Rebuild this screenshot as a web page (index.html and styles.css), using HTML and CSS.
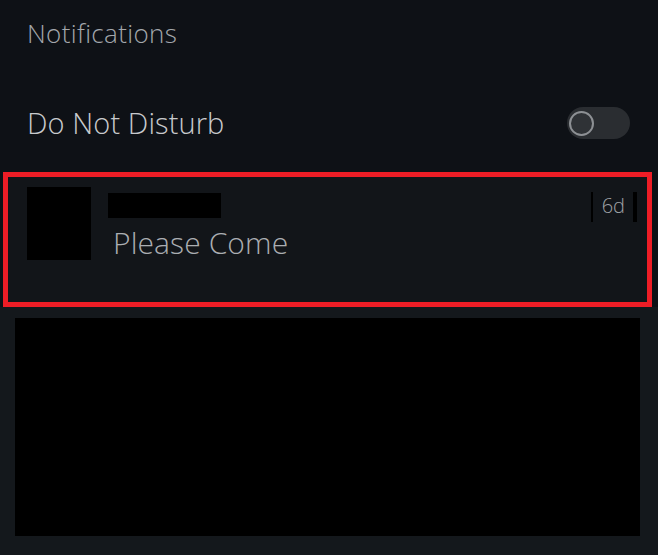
FILE: index.html
```html
<!DOCTYPE html>
<html lang="en">
<head>
<meta charset="utf-8">
<title>Notifications</title>
<link rel="stylesheet" href="styles.css">
</head>
<body>
<div class="screen">
  <div class="top">
    <h1 class="title">Notifications</h1>
    <div class="dnd-row">
      <span class="dnd-label">Do Not Disturb</span>
      <span class="toggle"><span class="knob"></span></span>
    </div>
  </div>
  <div class="card">
    <div class="avatar"></div>
    <div class="body">
      <div class="name-bar"></div>
      <div class="message">Please Come</div>
    </div>
    <div class="time"><span class="bar-thin"></span><span class="age">6d</span><span class="bar-thick"></span></div>
  </div>
  <div class="bottom">
    <div class="media"></div>
  </div>
</div>
</body>
</html>
```

FILE: styles.css
```css
html, body {
  margin: 0;
  padding: 0;
  background: #0e1116;
}
.screen {
  width: 658px;
  height: 555px;
  overflow: hidden;
  display: flex;
  flex-direction: column;
  font-family: "Open Sans", "Noto Sans", sans-serif;
  font-weight: 300;
  background: #0e1116;
}
.top {
  padding: 15px 28px 0 27px;
  height: 157px;
  box-sizing: border-box;
}
.title {
  margin: 0;
  font-size: 26px;
  font-weight: 300;
  line-height: 36px;
  color: #a3a7ac;
  letter-spacing: 0.35px;
}
.dnd-row {
  margin-top: 55px;
  display: flex;
  align-items: center;
  justify-content: space-between;
  height: 34px;
}
.dnd-label {
  font-size: 29px;
  line-height: 34px;
  color: #c8cacd;
  letter-spacing: 0.1px;
}
.toggle {
  width: 63px;
  height: 32px;
  border-radius: 16px;
  background: #2a2d31;
  display: flex;
  align-items: center;
  padding-left: 2px;
  box-sizing: border-box;
}
.knob {
  width: 25px;
  height: 25px;
  border-radius: 50%;
  border: 2px solid #8d9094;
  box-sizing: border-box;
  background: #2f3236;
}
.card {
  margin: 15px 0 0 3px;
  width: 649px;
  height: 135px;
  box-sizing: border-box;
  border: 5px solid #ee1d26;
  background: #121519;
  display: flex;
  padding: 10px 0 0 19px;
}
.avatar {
  width: 64px;
  height: 73px;
  background: #000;
  flex: none;
}
.body {
  margin-left: 17px;
  padding-top: 6px;
  flex: 1;
}
.name-bar {
  width: 113px;
  height: 25px;
  background: #000;
}
.message {
  margin-top: 5px;
  margin-left: 5px;
  font-size: 30px;
  line-height: 40px;
  color: #abaeb2;
  letter-spacing: 0.1px;
}
.time {
  display: flex;
  align-items: flex-start;
  height: 30px;
  margin-top: 5px;
  margin-right: 10px;
}
.bar-thin {
  width: 2px;
  height: 30px;
  background: #000;
}
.age {
  font-size: 20px;
  line-height: 28px;
  color: #a0a3a7;
  margin: 0 8px 0 9px;
}
.bar-thick {
  width: 4px;
  height: 30px;
  background: #000;
}
.bottom {
  flex: 1;
  background: #14181c;
  padding: 11px 0 0 15px;
}
.media {
  width: 625px;
  height: 218px;
  background: #000;
}
```
